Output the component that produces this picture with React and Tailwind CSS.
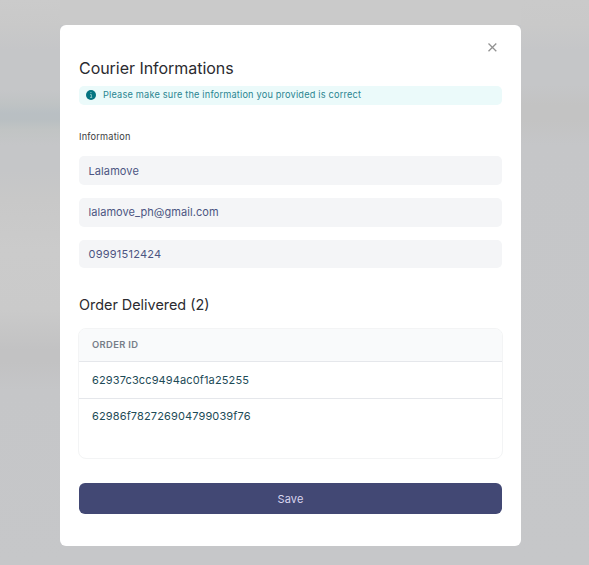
const fields = [
  { value: "Lalamove", space: "h-[29px] mb-[13px] pt-[2px] tracking-[0.1px]" },
  { value: "lalamove_ph@gmail.com", space: "h-[29px] mb-[13px] tracking-[0.06px]" },
  { value: "09991512424", space: "h-[28px] tracking-[0.24px]" },
];

export default function App() {
  return (
    <div className="flex h-[565px] w-[589px] bg-[#c6c7c9] font-['Inter',sans-serif]">
      <div className="w-[60px] bg-[linear-gradient(180deg,#cbcbcb_0px,#c9c9c9_25px,#c5c6c8_50px,#c5c6c8_90px,#bfc3c4_104px,#b9bfc3_113px,#b9bfc2_120px,#c1c4c4_130px,#c5c6c8_145px,#c5c6c8_170px,#c8c8c8_200px,#cbcbcb_250px,#cacaca_310px,#c2c2c3_350px,#c2c2c3_362px,#c5c6c8_390px,#c6c7c9_565px)]" />
      <div className="flex w-[461px] flex-col">
        <div className="h-[25px] bg-[#cacaca]" />
        <main className="flex h-[521px] flex-col rounded-[6px] bg-white px-[19px]">
          <div className="flex h-[34px] justify-end pt-[17px] pr-[4px]">
            <button aria-label="Close" className="h-[11px] w-[11px]">
              <svg width="11" height="11" viewBox="0 0 11 11" fill="none" stroke="#929292" strokeWidth="1.3">
                <path d="M1.5 1.5 9.3 9.3M9.3 1.5 1.5 9.3" />
              </svg>
            </button>
          </div>
          <h1 className="h-[27px] text-[16px] leading-[19px] tracking-[-0.04px] text-[#2b2b30]">Courier Informations</h1>
          <div className="flex h-[19px] items-center rounded-[5px] bg-[#ebfafa] pl-[7px]">
            <svg width="10" height="10" viewBox="0 0 10 10" className="mr-[7px] mb-px">
              <circle cx="5" cy="5" r="5" fill="#047481" />
              <path d="M4.3 2.6h1.2M4 4.6h1.4v2.8M4 7.4h2.2" stroke="#9bd0d3" strokeWidth=".8" fill="none" />
            </svg>
            <span className="mb-[1px] text-[9.2px] leading-[16px] tracking-[0.19px] text-[#2a8591]">
              Please make sure the information you provided is correct
            </span>
          </div>
          <div className="mt-[25px] h-[26px] text-[9.2px] leading-[14px] tracking-[0.19px] text-[#3c3e42]">Information</div>
          {fields.map((f) => (
            <div key={f.value} className={"flex shrink-0 items-center rounded-[5px] bg-[#f4f5f7] pl-[9.5px] text-[11px] text-[#4c5582] " + f.space}>
              {f.value}
            </div>
          ))}
          <h2 className="mt-[27px] h-[33px] text-[14.4px] leading-[20px] text-[#2b2b30]">Order Delivered (2)</h2>
          <div className="-mx-px h-[131px] shrink-0 overflow-hidden rounded-[8px] border border-[#f3f4f5]">
            <div className="flex h-[33px] items-center border-b border-[#e5e7eb] bg-[#f9fafb] pl-[13px] text-[9.4px] font-semibold tracking-[0.35px] text-[#777d88]">
              ORDER ID
            </div>
            <div className="flex h-[37px] items-center border-b border-[#e5e7eb] pl-[13px] text-[11px] tracking-[0.13px] text-[#1d4b57]">
              62937c3cc9494ac0f1a25255
            </div>
            <div className="flex h-[34px] items-center pl-[13px] text-[11px] tracking-[0.13px] text-[#1d4b57]">
              62986f782726904799039f76
            </div>
          </div>
          <button className="mt-[24px] h-[31px] shrink-0 rounded-[6px] bg-[#424874] pt-[2px] text-[11px] tracking-[0.15px] text-[#d9d5ef]">Save</button>
        </main>
      </div>
      <div className="w-[68px] bg-[linear-gradient(180deg,#cacaca_0px,#c9c9c9_25px,#c5c6c8_50px,#c5c6c8_85px,#c3c3c3_105px,#c3c3c3_120px,#c5c6c8_145px,#c6c7c9_565px)]" />
    </div>
  );
}
